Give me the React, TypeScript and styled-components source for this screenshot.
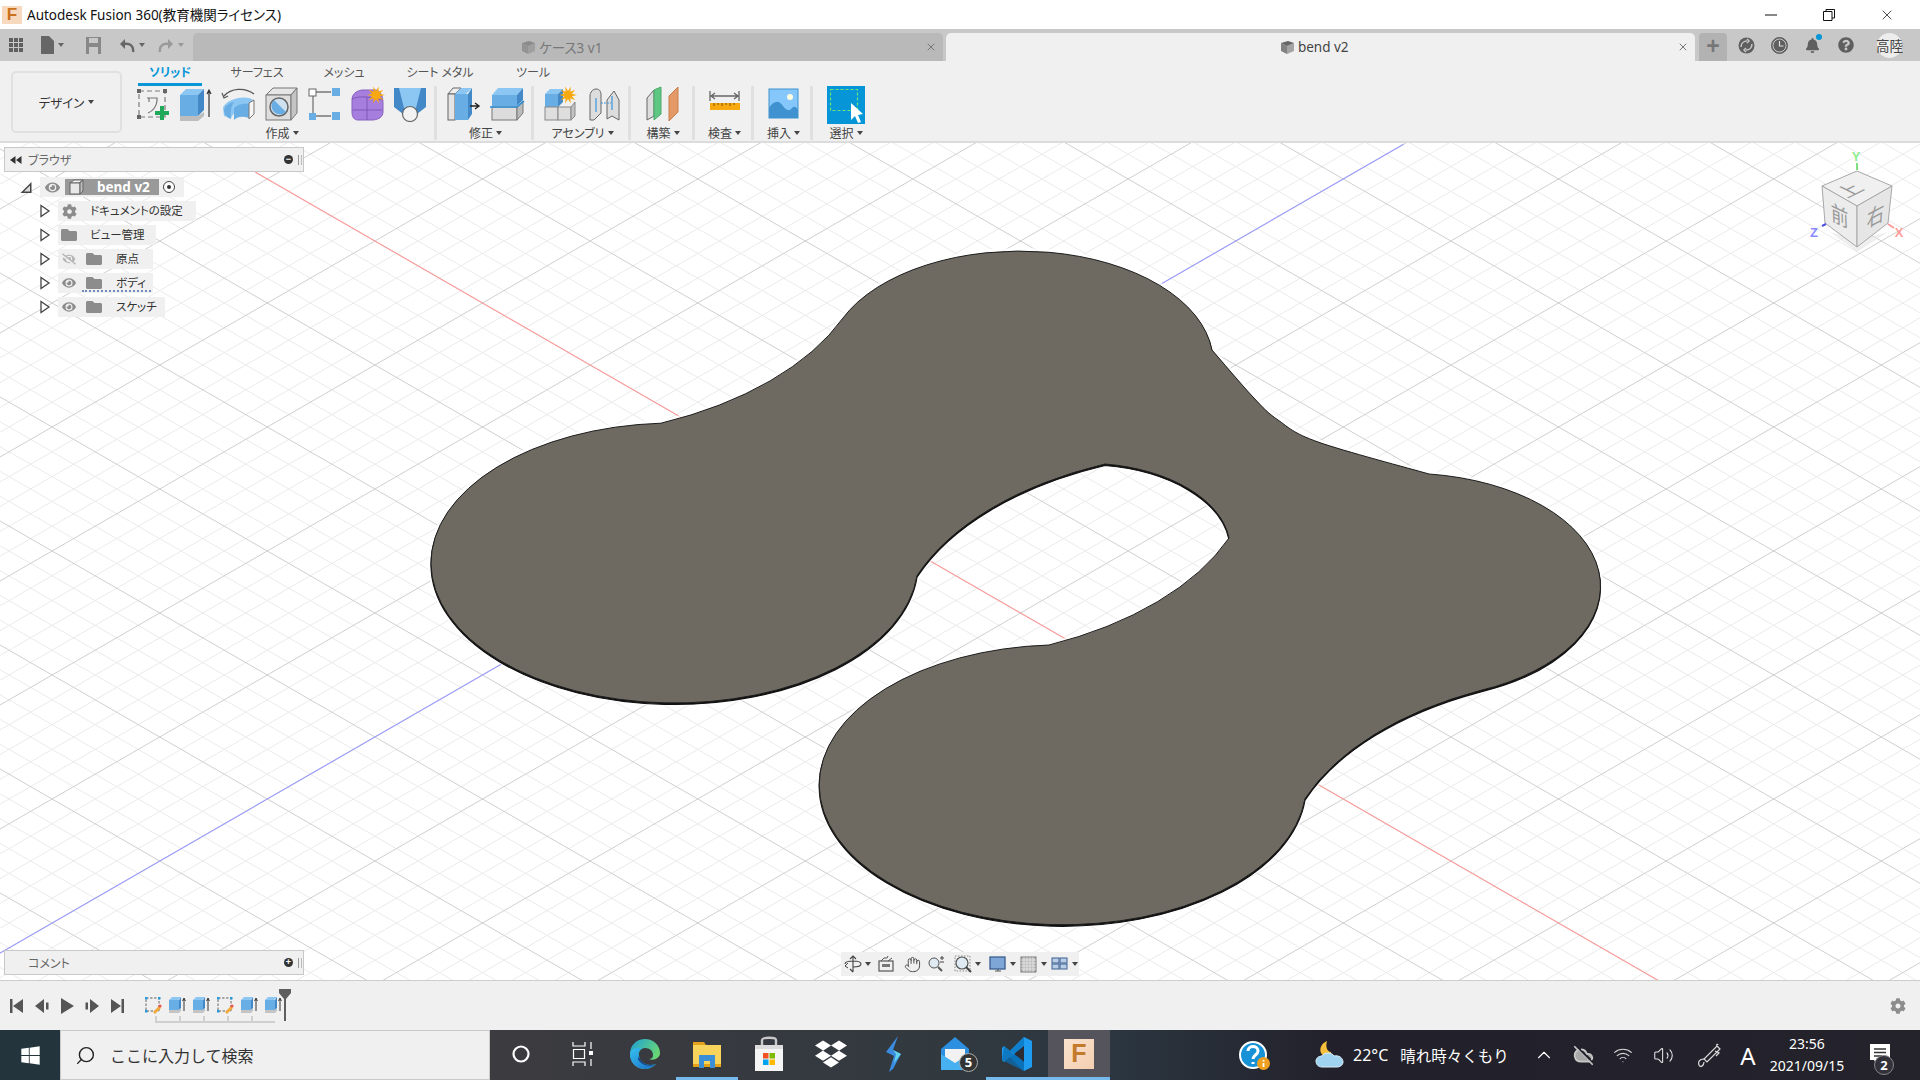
import React from "react";
import styled, { createGlobalStyle } from "styled-components";
import { FaCog, FaDropbox, FaEye, FaEyeSlash, FaFolder, FaQuestionCircle, FaWindows, FaBell } from "react-icons/fa";
import { ChevronUp, CloudOff, Hand, Search, Volume2, Wifi, X } from "lucide-react";

const GlobalStyle = createGlobalStyle`
  html, body { margin: 0; padding: 0; width: 1920px; height: 1080px; overflow: hidden; background: #fff; }
  body { font-family: "Noto Sans", "Noto Sans CJK JP", sans-serif; font-feature-settings: "palt"; }
`;

const jp = `"Noto Sans CJK JP", "Noto Sans", sans-serif`;

const Page = styled.div`
  width: 1920px;
  height: 1080px;
  display: flex;
  flex-direction: column;
`;

/* title bar */
const TitleBar = styled.div`
  height: 29px;
  flex: none;
  display: flex;
  align-items: center;
  background: #fff;
`;
const AppBadge = styled.div`
  width: 20px;
  height: 18px;
  margin-left: 2px;
  background: #f7d9bf;
  color: #c9711d;
  font: 700 17px/18px "Liberation Sans", sans-serif;
  text-align: center;
`;
const TitleText = styled.div`
  margin: 0 0 2px 5px;
  font-family: "Noto Sans", "Noto Sans CJK JP", sans-serif;
  font-size: 13.5px;
  color: #111;
`;
const WindowButtons = styled.div`
  margin-left: auto;
  margin-right: 4px;
  display: flex;
`;
const WindowButton = styled.div`
  width: 58px;
  height: 28px;
  display: flex;
  align-items: center;
  justify-content: center;
`;

/* tab strip */
const TabStrip = styled.div`
  height: 32px;
  flex: none;
  display: flex;
  align-items: flex-end;
  background: #c8c8c8;
`;
const QuickBar = styled.div`
  width: 193px;
  height: 32px;
  flex: none;
  display: flex;
  align-items: center;
  padding-left: 8px;
  box-sizing: border-box;
`;
const QuickButton = styled.div<{ $w: number; $ml?: number }>`
  width: ${(p) => p.$w}px;
  margin-left: ${(p) => p.$ml || 0}px;
  flex: none;
  display: flex;
  align-items: center;
  justify-content: center;
  gap: 4px;
`;
const Tabs = styled.div`
  width: 1502px;
  flex: none;
  display: flex;
  gap: 3px;
`;
const Tab = styled.div<{ $active?: boolean }>`
  flex: 1;
  height: 28px;
  box-sizing: border-box;
  padding-right: 12px;
  display: flex;
  align-items: center;
  justify-content: center;
  gap: 3px;
  position: relative;
  border-radius: 5px 5px 0 0;
  background: ${(p) => (p.$active ? "#f0f0f0" : "#b9b9b9")};
  color: ${(p) => (p.$active ? "#444" : "#777")};
  font-size: 13.5px;
  font-family: "Noto Sans", "Noto Sans CJK JP", sans-serif;
`;
const TabClose = styled.span`
  position: absolute;
  right: 6px;
  top: 8px;
  display: flex;
  color: #777;
`;
const AddTab = styled.div`
  width: 28px;
  height: 28px;
  margin-left: 4px;
  border-radius: 4px 4px 0 0;
  background: #b2b2b2;
  color: #777;
  font: 700 23px/27px "Liberation Sans", sans-serif;
  text-align: center;
`;
const TabTools = styled.div`
  display: flex;
  align-items: center;
  height: 32px;
  margin-left: 3px;
`;
const ToolButton = styled.div`
  width: 33px;
  display: flex;
  align-items: center;
  justify-content: center;
  position: relative;
  color: #5f5f5f;
`;
const BellDot = styled.span`
  position: absolute;
  right: 7px;
  top: -4px;
  width: 6px;
  height: 6px;
  border-radius: 50%;
  background: #0696d7;
`;
const Avatar = styled.div`
  width: 25px;
  height: 25px;
  margin-left: 15px;
  border-radius: 50%;
  background: #ededed;
  display: flex;
  align-items: center;
  justify-content: center;
  white-space: nowrap;
  font-family: ${jp};
  font-size: 13.5px;
  color: #444;
`;

/* ribbon */
const Ribbon = styled.div`
  height: 82px;
  flex: none;
  display: flex;
  box-sizing: border-box;
  background: #f0f0f0;
  border-bottom: 2px solid #dcdcdc;
  font-family: ${jp};
`;
const WorkspaceCell = styled.div`
  width: 130px;
  flex: none;
`;
const WorkspaceButton = styled.div`
  width: 111px;
  height: 62px;
  margin: 10px 0 0 11px;
  box-sizing: border-box;
  border: 2px solid #e0e0e0;
  border-radius: 5px;
  display: flex;
  align-items: center;
  justify-content: center;
  gap: 4px;
  font-size: 12.5px;
  color: #333;
`;
const RibbonBody = styled.div`
  display: flex;
  flex-direction: column;
`;
const RibbonTabs = styled.div`
  height: 25px;
  display: flex;
  padding-left: 8px;
`;
const RibbonTab = styled.div<{ $w: number; $active?: boolean }>`
  width: ${(p) => p.$w}px;
  flex: none;
  box-sizing: border-box;
  text-align: center;
  font-size: 12px;
  line-height: 22px;
  height: 25px;
  color: ${(p) => (p.$active ? "#0696d7" : "#555")};
  font-weight: ${(p) => (p.$active ? 700 : 400)};
  border-bottom: 3px solid ${(p) => (p.$active ? "#0696d7" : "transparent")};
`;
const Groups = styled.div`
  display: flex;
  align-items: flex-start;
`;
const Group = styled.div<{ $w: number; $first?: boolean; $last?: boolean }>`
  width: ${(p) => p.$w}px;
  height: 54px;
  flex: none;
  box-sizing: border-box;
  padding-left: ${(p) => (p.$first || p.$last ? 0 : 3)}px;
  display: flex;
  flex-direction: column;
  align-items: center;
  border-right: ${(p) => (p.$last ? "none" : "3px solid #e0e0e0")};
`;
const GroupIcons = styled.div`
  height: 39px;
  display: flex;
  align-items: flex-start;
  justify-content: center;
  gap: 7px;
`;
const GroupLabel = styled.div`
  height: 15px;
  display: flex;
  align-items: center;
  gap: 3px;
  font-size: 12px;
  color: #444;
  white-space: nowrap;
`;
const Caret = styled.i<{ $color?: string }>`
  display: inline-block;
  width: 0;
  height: 0;
  border-left: 3px solid transparent;
  border-right: 3px solid transparent;
  border-top: 4px solid ${(p) => p.$color || "#444"};
`;
const RibbonSvg = styled.svg`
  width: 36px;
  height: 36px;
  display: block;
  flex: none;
`;

/* viewport */
const Viewport = styled.div`
  position: relative;
  flex: 1;
  min-height: 0;
  overflow: hidden;
  background: #fff;
`;
const Scene = styled.svg`
  position: absolute;
  inset: 0;
  width: 1920px;
  height: 837px;
`;
const CubeLabel = styled.text`
  font-family: ${jp};
  font-size: 22px;
  fill: #9a9a9a;
  text-anchor: middle;
`;
const AxisLabel = styled.text`
  font-family: "Liberation Sans", sans-serif;
  font-size: 13px;
  font-weight: 700;
  text-anchor: middle;
`;
const SidePanel = styled.div<{ $top?: number; $bottom?: number }>`
  position: absolute;
  left: 4px;
  ${(p) => (p.$top !== undefined ? `top: ${p.$top}px;` : "")}
  ${(p) => (p.$bottom !== undefined ? `bottom: ${p.$bottom}px;` : "")}
  width: 300px;
  height: 25px;
  box-sizing: border-box;
  display: flex;
  align-items: center;
  background: #f0f0f0;
  border: 1px solid #c8c8c8;
  font-family: ${jp};
  font-size: 12px;
  color: #666;
`;
const PanelTitle = styled.span<{ $left: number }>`
  margin-left: ${(p) => p.$left}px;
`;
const PanelEnd = styled.div`
  margin-left: auto;
  display: flex;
  align-items: center;
  gap: 5px;
  padding-right: 1px;
`;
const RoundButton = styled.span`
  width: 9px;
  height: 9px;
  border-radius: 50%;
  background: #333;
  color: #fff;
  font: 700 9px/8px "Liberation Sans", sans-serif;
  text-align: center;
`;
const Grip = styled.span`
  width: 2px;
  height: 10px;
  border-left: 1px solid #999;
  border-right: 1px solid #bbb;
`;
const Tree = styled.div`
  position: absolute;
  left: 0;
  top: 32px;
  font-family: ${jp};
  font-size: 11.5px;
  color: #333;
`;
const TreeRow = styled.div<{ $indent: number }>`
  height: 24px;
  display: flex;
  align-items: center;
  padding-left: ${(p) => p.$indent}px;
`;
const TreeArrow = styled.svg`
  width: 12px;
  height: 14px;
  flex: none;
  display: block;
`;
const TreePill = styled.div<{ $w: number; $ml: number }>`
  position: relative;
  width: ${(p) => p.$w}px;
  height: 20px;
  margin-left: ${(p) => p.$ml}px;
  display: flex;
  align-items: center;
  background: #f0f0f0;
`;
const TreeSlot = styled.span<{ $w: number; $ml?: number }>`
  width: ${(p) => p.$w}px;
  margin-left: ${(p) => p.$ml || 0}px;
  flex: none;
  display: flex;
  align-items: center;
  justify-content: center;
  color: #8c8c8c;
`;
const TreeText = styled.span<{ $ml: number }>`
  margin-left: ${(p) => p.$ml}px;
  margin-bottom: 2px;
  white-space: nowrap;
`;
const RootName = styled.div`
  width: 94px;
  height: 16px;
  margin-left: 1px;
  display: flex;
  align-items: center;
  background: #999;
  color: #fff;
  font: 700 13.5px "Noto Sans", sans-serif;
`;
const Squiggle = styled.span`
  position: absolute;
  left: 24px;
  right: 2px;
  bottom: 1px;
  border-bottom: 2px dotted #6f8cbc;
`;
const NavBar = styled.div`
  position: absolute;
  left: 841px;
  bottom: 4px;
  height: 24px;
  display: flex;
  align-items: center;
  background: #f0f0f0;
`;
const NavItem = styled.div<{ $w: number }>`
  width: ${(p) => p.$w}px;
  height: 24px;
  flex: none;
  display: flex;
  align-items: center;
  justify-content: center;
  gap: 3px;
  color: #444;
`;
const SmallSvg = styled.svg`
  width: 18px;
  height: 18px;
  display: block;
  flex: none;
`;

/* timeline */
const TimelineBar = styled.div`
  height: 50px;
  flex: none;
  display: flex;
  align-items: center;
  box-sizing: border-box;
  background: #f0f0f0;
  border-top: 1px solid #cdcdcd;
  position: relative;
`;
const PlayButtons = styled.div`
  display: flex;
  width: 141px;
  box-sizing: border-box;
  padding-left: 4px;
  flex: none;
`;
const PlayButton = styled.div`
  width: 25px;
  flex: none;
  display: flex;
  justify-content: center;
`;
const Steps = styled.div`
  position: relative;
  height: 36px;
  display: flex;
  align-items: flex-start;
  padding-top: 8px;
  box-sizing: border-box;
`;
const Step = styled.div`
  width: 24px;
  flex: none;
  display: flex;
  justify-content: center;
`;
const StepBracket = styled.div`
  position: absolute;
  left: 14px;
  top: 28px;
  width: 120px;
  height: 5px;
  border-bottom: 2px solid #cfcfcf;
  background: repeating-linear-gradient(90deg, #cfcfcf 0 2px, transparent 2px 24px);
`;
const Playhead = styled.svg`
  position: absolute;
  left: 137px;
  top: 0;
  width: 14px;
  height: 34px;
`;
const TimelineGear = styled.div`
  margin-left: auto;
  margin-right: 14px;
  display: flex;
  color: #8d8d8d;
`;

/* taskbar */
const Taskbar = styled.div`
  height: 50px;
  flex: none;
  display: flex;
  align-items: stretch;
  background: linear-gradient(90deg, #3c3b40 25%, #31393f 50%, #2b3640 58%, #22202a 70%, #24222b 100%);
  font-family: ${jp};
  font-feature-settings: normal;
  color: #fff;
`;
const StartButton = styled.div`
  width: 60px;
  flex: none;
  display: flex;
  align-items: center;
  justify-content: center;
  background: #24343c;
`;
const SearchBox = styled.div`
  width: 430px;
  flex: none;
  box-sizing: border-box;
  display: flex;
  align-items: center;
  background: #f0f0f0;
  border: 1px solid #c9c9c9;
  color: #333;
  font-size: 16px;
`;
const SearchIcon = styled.span`
  display: flex;
  margin-left: 14px;
  margin-right: 14px;
  transform: scaleX(-1);
  color: #222;
`;
const TaskButton = styled.div<{ $open?: boolean; $active?: boolean }>`
  width: 62px;
  flex: none;
  position: relative;
  display: flex;
  align-items: center;
  justify-content: center;
  background: ${(p) => (p.$active ? "#55535c" : "transparent")};
  box-sizing: border-box;
  border-bottom: 3px solid ${(p) => (p.$open ? "#76b9ed" : "transparent")};
`;
const MailBadge = styled.span`
  position: absolute;
  right: 8px;
  bottom: 5px;
  width: 19px;
  height: 19px;
  box-sizing: border-box;
  border: 1px solid #aaa;
  border-radius: 50%;
  background: #333;
  font: 700 13px/17px "Noto Sans", sans-serif;
  text-align: center;
`;
const FusionTile = styled.div`
  width: 30px;
  height: 30px;
  background: linear-gradient(135deg, #f9e2cf, #f4cfb0);
  color: #c47a2b;
  font: 700 25px/29px "Liberation Sans", sans-serif;
  text-align: center;
`;
const Tray = styled.div`
  margin-left: auto;
  display: flex;
  align-items: stretch;
`;
const TrayItem = styled.div<{ $w: number }>`
  width: ${(p) => p.$w}px;
  flex: none;
  display: flex;
  align-items: center;
  justify-content: center;
  position: relative;
`;
const WeatherItem = styled.div`
  width: 245px;
  flex: none;
  box-sizing: border-box;
  padding-left: 35px;
  display: flex;
  align-items: center;
  font-size: 15.5px;
  white-space: nowrap;
`;
const WeatherDeg = styled.span`
  margin-left: 8px;
  margin-right: 12px;
  font-family: "Noto Sans", sans-serif;
  font-size: 16px;
`;
const ImeLetter = styled.span`
  font: 400 24px "Noto Sans", sans-serif;
`;
const Clock = styled.div`
  font: 400 14px/22px "Noto Sans", sans-serif;
  text-align: center;
`;
const NoteBadge = styled.span`
  position: absolute;
  right: 13px;
  bottom: 5px;
  width: 20px;
  height: 20px;
  box-sizing: border-box;
  border: 1px solid #888;
  border-radius: 50%;
  background: #33313a;
  font: 700 13px/18px "Noto Sans", sans-serif;
  text-align: center;
`;

/* scene geometry, in page coordinates */
const ORIGIN = { x: 805.3, y: 489 };
const STEP = { x: 107.6, y: 62 };

type Line = { x1: number; y1: number; x2: number; y2: number; major: boolean };

function buildGrid(): Line[] {
  const lines: Line[] = [];
  const reach = 30;
  for (let i = -100; i <= 100; i++) {
    const k = i / 5;
    const major = i % 5 === 0;
    // lines running along the blue direction
    let cx = ORIGIN.x + k * STEP.x;
    let cy = ORIGIN.y + k * STEP.y;
    lines.push({ x1: cx - reach * STEP.x, y1: cy + reach * STEP.y, x2: cx + reach * STEP.x, y2: cy - reach * STEP.y, major });
    // lines running along the red direction
    cx = ORIGIN.x + k * STEP.x;
    cy = ORIGIN.y - k * STEP.y;
    lines.push({ x1: cx - reach * STEP.x, y1: cy - reach * STEP.y, x2: cx + reach * STEP.x, y2: cy + reach * STEP.y, major });
  }
  return lines;
}

const GRID = buildGrid();

// catmull-rom through the points, the start point is already on the path
function curve(run: number[][]): string {
  let d = "";
  for (let i = 0; i < run.length - 1; i++) {
    const p0 = run[i - 1] || run[i];
    const p1 = run[i];
    const p2 = run[i + 1];
    const p3 = run[i + 2] || p2;
    const c1x = p1[0] + (p2[0] - p0[0]) / 6;
    const c1y = p1[1] + (p2[1] - p0[1]) / 6;
    const c2x = p2[0] - (p3[0] - p1[0]) / 6;
    const c2y = p2[1] - (p3[1] - p1[1]) / 6;
    d += `C${c1x.toFixed(1)} ${c1y.toFixed(1)} ${c2x.toFixed(1)} ${c2y.toFixed(1)} ${p2[0]} ${p2[1]}`;
  }
  return d;
}

// the lobes are circles in the sketch, so ellipses in this view
const SHAPE = [
  "M661 423.2",
  "A340 195 0 0 0 843 318",
  "A193 111 0 0 1 1212 350",
  curve([[1212, 350], [1253, 397], [1278, 420], [1318, 442], [1429, 474]]),
  "A195 113 0 0 1 1480 690.6",
  "A340 195 0 0 0 1305 798.7",
  "A243.5 140 0 1 1 1049 645",
  "A340 195 0 0 0 1229 538",
  "A145 85 0 0 0 1105 464",
  "A340 195 0 0 0 917 575.7",
  "A243.5 140 0 1 1 661 423.2",
  "Z",
].join("");

function ViewCube() {
  return (
    <g>
      <polygon points="1830,232 1857,252 1888,232 1857,240" fill="#e4e4e4" opacity="0.6" />
      <polygon points="1822,186 1857,171 1892,186 1857,206" fill="#f0f0f0" stroke="#a8a8a8" />
      <polygon points="1822,186 1857,206 1857,247 1825,223" fill="#ececec" stroke="#a8a8a8" />
      <polygon points="1892,186 1857,206 1857,247 1888,223" fill="#e6e6e6" stroke="#a8a8a8" />
      <CubeLabel transform="matrix(0.85 -0.42 0.85 0.42 1856 194)">上</CubeLabel>
      <CubeLabel transform="matrix(0.8 0.38 0.04 1 1840 224)">前</CubeLabel>
      <CubeLabel transform="matrix(0.8 -0.42 -0.06 1 1875 224)">右</CubeLabel>
      <line x1="1857" y1="170" x2="1857" y2="163" stroke="#7fe27f" strokeWidth="2" />
      <line x1="1822" y1="226" x2="1826" y2="224" stroke="#4f4fe0" strokeWidth="2" />
      <line x1="1888" y1="224" x2="1894" y2="228" stroke="#ff9a9a" strokeWidth="2" />
      <AxisLabel x="1856" y="161" fill="#8fee8f">Y</AxisLabel>
      <AxisLabel x="1814" y="237" fill="#8a8aff">Z</AxisLabel>
      <AxisLabel x="1899" y="237" fill="#ff9d9d">X</AxisLabel>
    </g>
  );
}

function SceneView() {
  return (
    <Scene viewBox="0 143 1920 837">
      {GRID.filter((l) => !l.major).map((l, i) => (
        <line key={i} {...{ x1: l.x1, y1: l.y1, x2: l.x2, y2: l.y2 }} stroke="#ebebeb" strokeWidth="1" />
      ))}
      {GRID.filter((l) => l.major).map((l, i) => (
        <line key={i} {...{ x1: l.x1, y1: l.y1, x2: l.x2, y2: l.y2 }} stroke="#cfcfcf" strokeWidth="1" />
      ))}
      <line x1={ORIGIN.x - 8 * STEP.x} y1={ORIGIN.y + 8 * STEP.y} x2={ORIGIN.x + 5.56 * STEP.x} y2={ORIGIN.y - 5.56 * STEP.y} stroke="#9c9cff" strokeWidth="1.1" />
      <line x1={ORIGIN.x - 5.11 * STEP.x} y1={ORIGIN.y - 5.11 * STEP.y} x2={ORIGIN.x + 8 * STEP.x} y2={ORIGIN.y + 8 * STEP.y} stroke="#ff9c9c" strokeWidth="1.1" />
      <path d={SHAPE} fill="none" stroke="#fff" strokeWidth="6" opacity="0.7" />
      <path d={SHAPE} transform="translate(0 1.5)" fill="#111" stroke="#111" strokeWidth="1.2" />
      <path d={SHAPE} fill="#6e6a61" stroke="#1c1c1c" strokeWidth="1" />
      <ViewCube />
    </Scene>
  );
}

/* ribbon drawings */
const BLUE = "#68ade4";
const BLUE_DARK = "#4489c7";
const BLUE_LIGHT = "#8cc6f2";

function SketchIcon() {
  return (
    <RibbonSvg viewBox="0 0 36 36">
      <rect x="4" y="5" width="26" height="26" fill="none" stroke="#7d7d7d" strokeWidth="1.2" strokeDasharray="5 3" />
      {[[2, 3], [28, 3], [2, 29]].map(([x, y]) => (
        <rect key={x * 10 + y} x={x} y={y} width="4" height="4" fill="#666" />
      ))}
      <path d="M12 12h10v3M14 12v4M22 14c0 6-4 11-9 13" fill="none" stroke="#777" strokeWidth="1.2" />
      <path d="M25 20h4v5h5v4h-5v5h-4v-5h-5v-4h5z" fill="#21a95a" />
    </RibbonSvg>
  );
}
function ExtrudeIcon() {
  return (
    <RibbonSvg viewBox="0 0 36 36">
      <polygon points="2,9 8,3 26,3 20,9" fill={BLUE_LIGHT} />
      <rect x="2" y="9" width="18" height="21" fill={BLUE} />
      <polygon points="20,9 26,3 26,24 20,30" fill={BLUE_DARK} />
      <polygon points="2,30 20,30 26,26 26,30 20,35 2,35" fill="#bdbdbd" />
      <path d="M31 31V5M29 8l2-4 2 4" fill="none" stroke="#333" strokeWidth="1.2" />
    </RibbonSvg>
  );
}
function RevolveIcon() {
  return (
    <RibbonSvg viewBox="0 0 36 36">
      <path d="M3 10C10 2 24 1 33 8" fill="none" stroke="#555" strokeWidth="1.3" />
      <path d="M1 7l2 5 4-2" fill="none" stroke="#555" strokeWidth="1.2" />
      <path d="M2 22C4 14 24 8 32 14L28 24C22 22 14 24 10 32L3 30z" fill={BLUE_LIGHT} />
      <path d="M3 24C4 20 8 17 13 16C10 20 9 27 10 33C6 32 3 28 3 24z" fill={BLUE} />
      <path d="M13 22C17 18 23 17 28 18V32C22 30 17 30 13 34z" fill={BLUE} />
      <polygon points="28,17 33,14 33,28 28,33" fill="#f5f5f5" stroke="#777" />
    </RibbonSvg>
  );
}
function HoleIcon() {
  return (
    <RibbonSvg viewBox="0 0 36 36">
      <polygon points="2,9 9,2 33,2 27,9" fill="#e6e6e6" stroke="#777" />
      <rect x="2" y="9" width="25" height="25" fill="#dedede" stroke="#777" />
      <polygon points="27,9 33,2 33,27 27,34" fill="#c4c4c4" stroke="#777" />
      <circle cx="15" cy="21" r="9" fill="#cfe0ee" stroke="#666" strokeWidth="1.5" />
      <path d="M10 14a8 8 0 0 0 12 12z" fill={BLUE} />
    </RibbonSvg>
  );
}
function PatternIcon() {
  return (
    <RibbonSvg viewBox="0 0 36 36">
      <path d="M9 6h15M6 10v19M9 30h15" stroke="#777" strokeWidth="1.3" />
      <rect x="2" y="3" width="7" height="7" fill="#fff" stroke="#666" />
      <rect x="25" y="2" width="8" height="8" fill={BLUE} />
      <rect x="2" y="27" width="7" height="7" fill={BLUE} />
      <rect x="25" y="26" width="8" height="8" fill={BLUE} />
    </RibbonSvg>
  );
}
function Star({ x, y, r }: { x: number; y: number; r: number }) {
  const pts: string[] = [];
  for (let i = 0; i < 20; i++) {
    const a = (i * Math.PI) / 10;
    const d = i % 2 ? r * 0.45 : r;
    pts.push(`${(x + Math.cos(a) * d).toFixed(1)},${(y + Math.sin(a) * d).toFixed(1)}`);
  }
  return <polygon points={pts.join(" ")} fill="#f7a90f" />;
}
function FormIcon() {
  return (
    <RibbonSvg viewBox="0 0 36 36">
      <path d="M2 14C2 8 6 5 12 4H26C32 6 33 12 33 18V26C33 31 28 34 22 34H8C4 34 2 31 2 26z" fill="#a67ede" stroke="#8860c0" />
      <path d="M2 13C8 10 18 10 32 14M17 11V34M3 24H32" fill="none" stroke="#7e58b8" />
      <Star x={26} y={9} r={9} />
    </RibbonSvg>
  );
}
function LoftIcon() {
  return (
    <RibbonSvg viewBox="0 0 36 36">
      <polygon points="1,2 33,2 33,21 24,28 10,28 1,21" fill={BLUE_DARK} />
      <polygon points="6,2 28,2 23,22 11,22" fill={BLUE_LIGHT} />
      <circle cx="17" cy="28" r="7.5" fill="#f2f2f2" stroke="#666" strokeWidth="1.2" />
    </RibbonSvg>
  );
}
function PressPullIcon() {
  return (
    <RibbonSvg viewBox="0 0 36 36">
      <polygon points="2,8 7,2 15,2 9,8" fill="#eee" stroke="#666" />
      <rect x="2" y="8" width="7" height="26" fill="#e4e4e4" stroke="#666" />
      <polygon points="9,8 15,2 26,2 20,8" fill={BLUE_LIGHT} />
      <rect x="9" y="8" width="13" height="26" fill={BLUE} />
      <polygon points="22,8 26,2 26,28 22,34" fill={BLUE_DARK} />
      <path d="M24 20h8M29 17l4 3-4 3" fill="none" stroke="#222" strokeWidth="1.4" />
    </RibbonSvg>
  );
}
function FilletIcon() {
  return (
    <RibbonSvg viewBox="0 0 36 36">
      <polygon points="3,9 9,2 34,2 28,9" fill={BLUE_LIGHT} />
      <rect x="3" y="9" width="25" height="11" fill={BLUE} />
      <polygon points="28,9 34,2 34,14 28,20" fill={BLUE_DARK} />
      <rect x="3" y="21" width="25" height="13" fill="#dcdcdc" stroke="#777" />
      <polygon points="28,21 34,15 34,27 28,34" fill="#bbb" stroke="#777" />
      <path d="M1 21H28L35 15" fill="none" stroke="#2a8fd8" strokeWidth="1.5" />
    </RibbonSvg>
  );
}
function NewComponentIcon() {
  return (
    <RibbonSvg viewBox="0 0 36 36">
      <polygon points="2,8 7,3 20,3 15,8" fill={BLUE_LIGHT} />
      <rect x="2" y="8" width="13" height="13" fill={BLUE} />
      <polygon points="15,8 20,3 20,16 15,21" fill={BLUE_DARK} />
      <rect x="2" y="21" width="13" height="13" fill="#dedede" stroke="#888" />
      <rect x="15" y="21" width="13" height="13" fill="#dedede" stroke="#888" />
      <polygon points="28,21 32,16 32,30 28,34" fill="#c2c2c2" stroke="#888" />
      <Star x={25} y={9} r={9} />
    </RibbonSvg>
  );
}
function JointIcon() {
  return (
    <RibbonSvg viewBox="0 0 36 36">
      <path d="M4 34V10C4 6 7 3 10 3C14 3 15 6 15 9V27L8 34z" fill="#ddd" stroke="#666" />
      <path d="M21 14L28 5L33 14V34L26 30L21 33z" fill="#ddd" stroke="#666" />
      <path d="M10 12v14M26 10v14" stroke="#3c94dc" strokeWidth="1.2" />
      <path d="M15 17h10" stroke="#3c94dc" strokeWidth="1" strokeDasharray="2 1" />
    </RibbonSvg>
  );
}
function PlaneIcon() {
  return (
    <RibbonSvg viewBox="0 0 36 36">
      <polygon points="2,12 9,4 9,30 2,34" fill="#ddd" stroke="#666" />
      <polygon points="9,4 16,1 16,28 9,34" fill="#5ec782" stroke="#4aa86c" />
      <polygon points="24,10 33,1 33,26 24,35" fill="#e49a66" stroke="#c97f4c" />
    </RibbonSvg>
  );
}
function MeasureIcon() {
  return (
    <RibbonSvg viewBox="0 0 36 36">
      <path d="M3 5V15M32 5V15M4 10H31M8 7l-4 3 4 3M27 7l4 3-4 3" fill="none" stroke="#666" strokeWidth="1.3" />
      <rect x="3" y="17" width="30" height="7" fill="#f7a90f" />
      <path d="M7 17v3M11 17v2M15 17v3M19 17v2M23 17v3M27 17v2" stroke="#7b5200" />
    </RibbonSvg>
  );
}
function ImageIcon() {
  return (
    <RibbonSvg viewBox="0 0 36 36">
      <rect x="3" y="3" width="29" height="29" fill="#86c7fb" stroke="#3f93ce" />
      <circle cx="24" cy="11" r="3" fill="#fdfbe0" />
      <path d="M3 32V22C8 14 13 14 17 20C20 24 23 26 26 22C28 20 30 20 32 24V32z" fill="#3f92cf" />
    </RibbonSvg>
  );
}
function SelectIcon() {
  return (
    <svg width="38" height="38" viewBox="0 0 38 38" style={{ display: "block" }}>
      <rect width="38" height="38" fill="#0696d7" />
      <rect x="3.5" y="3.5" width="27" height="21" fill="none" stroke="#6ee07c" strokeWidth="1.2" strokeDasharray="3 2" />
      <path d="M24 17V34L28 30L31 37L34 36L31 29L36 28z" fill="#fff" />
    </svg>
  );
}

const RIBBON_GROUPS = [
  { label: "作成", w: 307, icons: [SketchIcon, ExtrudeIcon, RevolveIcon, HoleIcon, PatternIcon, FormIcon, LoftIcon] },
  { label: "修正", w: 97, icons: [PressPullIcon, FilletIcon] },
  { label: "アセンブリ", w: 97, icons: [NewComponentIcon, JointIcon] },
  { label: "構築", w: 64, icons: [PlaneIcon] },
  { label: "検査", w: 59, icons: [MeasureIcon] },
  { label: "挿入", w: 59, icons: [ImageIcon] },
  { label: "選択", w: 66, icons: [SelectIcon] },
];

const RIBBON_TABS = [
  { label: "ソリッド", w: 64 },
  { label: "サーフェス", w: 110 },
  { label: "メッシュ", w: 64 },
  { label: "シート メタル", w: 128 },
  { label: "ツール", w: 58 },
];

function RibbonArea() {
  return (
    <Ribbon>
      <WorkspaceCell>
        <WorkspaceButton>
          デザイン <Caret />
        </WorkspaceButton>
      </WorkspaceCell>
      <RibbonBody>
        <RibbonTabs>
          {RIBBON_TABS.map((t, i) => (
            <RibbonTab key={t.label} $w={t.w} $active={i === 0}>{t.label}</RibbonTab>
          ))}
        </RibbonTabs>
        <Groups>
          {RIBBON_GROUPS.map((g, i) => (
            <Group key={g.label} $w={g.w} $first={i === 0} $last={i === RIBBON_GROUPS.length - 1}>
              <GroupIcons>
                {g.icons.map((Icon, k) => (
                  <Icon key={k} />
                ))}
              </GroupIcons>
              <GroupLabel>
                {g.label}
                <Caret />
              </GroupLabel>
            </Group>
          ))}
        </Groups>
      </RibbonBody>
    </Ribbon>
  );
}

/* browser tree */
function ClosedArrow() {
  return (
    <TreeArrow viewBox="0 0 12 14">
      <path d="M2 1.5L10 7L2 12.5z" fill="#fff" stroke="#444" strokeWidth="1.3" />
    </TreeArrow>
  );
}

const NODES = [
  { text: "ドキュメントの設定", w: 138, kind: "gear" },
  { text: "ビュー管理", w: 98, kind: "folder" },
  { text: "原点", w: 95, kind: "hidden" },
  { text: "ボディ", w: 95, kind: "shown", warn: true },
  { text: "スケッチ", w: 107, kind: "shown" },
];

function BrowserTree() {
  return (
    <Tree>
      <TreeRow $indent={20}>
        <TreeArrow viewBox="0 0 12 14">
          <path d="M0.5 13L11.5 2V13z" fill="#444" />
          <path d="M4 11.5L10 5.5V11.5z" fill="#ddd" />
        </TreeArrow>
        <TreePill $w={144} $ml={8}>
          <TreeSlot $w={24}><FaEye size={15} /></TreeSlot>
          <RootName>
            <svg width="18" height="16" viewBox="0 0 18 16" style={{ marginLeft: 3 }}>
              <polygon points="2,4 6,1 15,1 11,4" fill="#f4f4f4" stroke="#666" />
              <rect x="2" y="4" width="10" height="11" fill="#e8e8e8" stroke="#666" />
              <polygon points="12,4 15,1 15,12 12,15" fill="#bcbcbc" stroke="#666" />
            </svg>
            <span style={{ marginLeft: 11 }}>bend v2</span>
          </RootName>
          <svg width="14" height="14" viewBox="0 0 14 14" style={{ marginLeft: 3 }}>
            <circle cx="7" cy="7" r="5.5" fill="#fff" stroke="#444" />
            <circle cx="7" cy="7" r="2" fill="#333" />
          </svg>
        </TreePill>
      </TreeRow>
      {NODES.map((n) => (
        <TreeRow key={n.text} $indent={39}>
          <ClosedArrow />
          <TreePill $w={n.w} $ml={7}>
            {n.kind === "gear" && (
              <TreeSlot $w={16} $ml={3}><FaCog size={15} /></TreeSlot>
            )}
            {n.kind === "folder" && (
              <TreeSlot $w={16} $ml={3}><FaFolder size={16} /></TreeSlot>
            )}
            {(n.kind === "shown" || n.kind === "hidden") && (
              <>
                <TreeSlot $w={16} $ml={3}>
                  {n.kind === "shown" ? <FaEye size={14} /> : <FaEyeSlash size={14} color="#b5b5b5" />}
                </TreeSlot>
                <TreeSlot $w={16} $ml={9}><FaFolder size={16} /></TreeSlot>
              </>
            )}
            <TreeText $ml={n.kind === "gear" || n.kind === "folder" ? 13 : 14}>{n.text}</TreeText>
            {n.warn && <Squiggle />}
          </TreePill>
        </TreeRow>
      ))}
    </Tree>
  );
}

/* navigation bar under the viewport */
function NavBarArea() {
  return (
    <NavBar>
      <NavItem $w={32}>
        <SmallSvg viewBox="0 0 18 18">
          <path d="M9 1v16M6 4l3-3 3 3M6 14l3 3M1 9c0-2 3-3 8-3s8 1 8 3-4 3-8 3" fill="none" stroke="#444" strokeWidth="1.1" />
          <path d="M4 8L1 11l3 2" fill="none" stroke="#444" />
        </SmallSvg>
        <Caret />
      </NavItem>
      <NavItem $w={26}>
        <SmallSvg viewBox="0 0 18 18">
          <rect x="2" y="6" width="14" height="10" fill="none" stroke="#555" strokeWidth="1.2" />
          <rect x="5" y="9" width="8" height="3" fill="#777" />
          <path d="M4 6l3-3h3l1-2M11 6l4-3" fill="none" stroke="#555" />
        </SmallSvg>
      </NavItem>
      <NavItem $w={26}>
        <Hand size={17} strokeWidth={1.3} />
      </NavItem>
      <NavItem $w={22}>
        <SmallSvg viewBox="0 0 18 18">
          <circle cx="7" cy="8" r="5" fill="#dfeaf3" stroke="#555" />
          <path d="M11 12l4 4" stroke="#555" strokeWidth="2" />
          <path d="M13 3h4M15 1v4M13 7h4" stroke="#444" />
        </SmallSvg>
      </NavItem>
      <NavItem $w={40}>
        <SmallSvg viewBox="0 0 18 18">
          <rect x="1" y="1" width="15" height="15" fill="none" stroke="#888" strokeDasharray="1.5 1.5" />
          <circle cx="8" cy="8" r="6" fill="#dfeaf3" stroke="#555" strokeWidth="1.2" />
          <path d="M12 12l5 5" stroke="#444" strokeWidth="2" />
        </SmallSvg>
        <Caret />
      </NavItem>
      <NavItem $w={31}>
        <SmallSvg viewBox="0 0 18 18">
          <rect x="1" y="2" width="15" height="12" fill="#7ea6d6" stroke="#3a5f8f" strokeWidth="1.3" />
          <path d="M6 16h6M9 14v2" stroke="#555" />
        </SmallSvg>
        <Caret />
      </NavItem>
      <NavItem $w={31}>
        <SmallSvg viewBox="0 0 18 18">
          <rect x="1" y="2" width="15" height="15" fill="#bbb" stroke="#777" />
          <path d="M4 2v15M7 2v15M10 2v15M13 2v15M1 5h15M1 8h15M1 11h15M1 14h15" stroke="#eee" strokeWidth="0.7" />
        </SmallSvg>
        <Caret />
      </NavItem>
      <NavItem $w={30}>
        <SmallSvg viewBox="0 0 18 18">
          <rect x="1" y="3" width="7" height="5" fill="#b9cde6" stroke="#3a5f8f" />
          <rect x="9" y="3" width="7" height="5" fill="#b9cde6" stroke="#3a5f8f" />
          <rect x="1" y="9" width="7" height="5" fill="#b9cde6" stroke="#3a5f8f" />
          <rect x="9" y="9" width="7" height="5" fill="#b9cde6" stroke="#3a5f8f" />
        </SmallSvg>
        <Caret />
      </NavItem>
    </NavBar>
  );
}

/* timeline */
const PLAY_PATHS = [
  "M2 2h2.5v14H2zM15 2v14L5 9z",
  "M11 2v14L2 9zM13 5.5h2.5v7H13z",
  "M3 1v16l13-8z",
  "M7 2v14l9-7zM2.5 5.5H5v7H2.5z",
  "M3 2v14l10-7zM13.5 2H16v14h-2.5z",
];

function SketchStep() {
  return (
    <SmallSvg viewBox="0 0 18 18">
      <rect x="2" y="2" width="13" height="13" fill="none" stroke="#666" strokeDasharray="2.5 1.5" />
      <rect x="1" y="1" width="2.5" height="2.5" fill="#2a9ad8" />
      <rect x="14" y="1" width="2.5" height="2.5" fill="#2a9ad8" />
      <rect x="1" y="14" width="2.5" height="2.5" fill="#2a9ad8" />
      <path d="M9 16l6-6 2 2-6 6z" fill="#f2a93b" />
      <circle cx="16" cy="10" r="1.6" fill="#e8564e" />
    </SmallSvg>
  );
}
function ExtrudeStep() {
  return (
    <SmallSvg viewBox="0 0 18 18">
      <polygon points="1,4 4,1 13,1 10,4" fill={BLUE_LIGHT} />
      <rect x="1" y="4" width="10" height="10" fill={BLUE} />
      <polygon points="11,4 13,1 13,12 11,14" fill={BLUE_DARK} />
      <polygon points="1,14 11,14 13,12 13,15 11,17 1,17" fill="#c4c4c4" />
      <path d="M16 15V3M14.6 5L16 2l1.4 3" fill="none" stroke="#333" />
    </SmallSvg>
  );
}

function TimelineArea() {
  return (
    <TimelineBar>
      <PlayButtons>
        {PLAY_PATHS.map((d) => (
          <PlayButton key={d}>
            <SmallSvg viewBox="0 0 18 18">
              <path d={d} fill="#555" />
            </SmallSvg>
          </PlayButton>
        ))}
      </PlayButtons>
      <Steps>
        {[SketchStep, ExtrudeStep, ExtrudeStep, SketchStep, ExtrudeStep, ExtrudeStep].map((S, i) => (
          <Step key={i}>
            <S />
          </Step>
        ))}
        <StepBracket />
        <Playhead viewBox="0 0 14 34">
          <path d="M1 1h12v4L8 11v22H6V11L1 5z" fill="#5e5e5e" />
        </Playhead>
      </Steps>
      <TimelineGear>
        <FaCog size={16} />
      </TimelineGear>
    </TimelineBar>
  );
}

/* taskbar */
function EdgeIcon() {
  return (
    <svg width="32" height="32" viewBox="0 0 32 32">
      <defs>
        <linearGradient id="edgeA" x1="0" y1="0" x2="1" y2="1">
          <stop offset="0" stopColor="#35c1f1" />
          <stop offset="1" stopColor="#1b6cc4" />
        </linearGradient>
        <linearGradient id="edgeB" x1="0" y1="0" x2="1" y2="0.6">
          <stop offset="0" stopColor="#1f9fd8" />
          <stop offset="1" stopColor="#6fdc6a" />
        </linearGradient>
      </defs>
      <path d="M16 1C8 1 1 7 1 16C1 25 8 31 16 31C20 31 24 29 27 26C18 29 11 25 10 18C9 14 12 10 16 10C21 10 24 13 24 17C24 20 22 21 20 21C25 23 31 20 31 15C31 7 24 1 16 1z" fill="url(#edgeB)" />
      <path d="M1 16C1 25 8 31 16 31C20 31 24 29 27 26C18 29 11 25 10 18C9 14 11 11 13 10C7 9 2 11 1 16z" fill="url(#edgeA)" />
      <path d="M10 18C11 25 18 29 27 26C22 29 12 28 9 21z" fill="#123f85" />
    </svg>
  );
}
function ExplorerIcon() {
  return (
    <svg width="30" height="28" viewBox="0 0 30 28">
      <path d="M1 2h11l2 3H1z" fill="#e3a21a" />
      <rect x="1" y="5" width="28" height="22" fill="#f9d45c" />
      <path d="M1 24h28v3H1z" fill="#e3a21a" />
      <path d="M7 28V15h16v13h-5v-7h-6v7z" fill="#3a8fd6" />
    </svg>
  );
}
function StoreIcon() {
  return (
    <svg width="30" height="36" viewBox="0 0 30 36">
      <path d="M8 10V4c0-3 14-3 14 0v6" fill="none" stroke="#c8c8c8" strokeWidth="2.4" />
      <rect x="1" y="9" width="28" height="26" fill="#f5f5f5" />
      <rect x="1" y="9" width="28" height="4" fill="#dcdcdc" />
      <rect x="9" y="17" width="5.5" height="5.5" fill="#f25022" />
      <rect x="15.5" y="17" width="5.5" height="5.5" fill="#7fba00" />
      <rect x="9" y="23.5" width="5.5" height="5.5" fill="#00a4ef" />
      <rect x="15.5" y="23.5" width="5.5" height="5.5" fill="#ffb900" />
    </svg>
  );
}
function BoltIcon() {
  return (
    <svg width="18" height="36" viewBox="0 0 18 36">
      <path d="M14 0L2 16L10 20L5 36L9 33L17 18L9 14z" fill="#3b8be0" />
      <path d="M9 14L17 18L10 27L12 18z" fill="#62d3ea" />
    </svg>
  );
}
function MailIcon() {
  return (
    <svg width="32" height="36" viewBox="0 0 32 36">
      <path d="M2 13L16 1L30 13V34H2z" fill="#2c8fe0" />
      <path d="M6 13h20v9L16 28L6 22z" fill="#f2f2f2" />
      <path d="M2 18L16 27L30 18V34H2z" fill="#46b0f0" />
    </svg>
  );
}
function CodeIcon() {
  return (
    <svg width="32" height="36" viewBox="0 0 32 36">
      <path d="M23 1L31 5V31L23 35L9 21L3 26L1 24V12L3 10L9 15z" fill="#1f9cf0" />
      <path d="M23 1V35L9 21L15 18L9 15z" fill="#0e7fcd" />
      <path d="M23 10L13 18L23 26z" fill="#2c2c34" />
      <path d="M3 10L23 26V35L1 24z" fill="#0a6db3" opacity="0.75" />
    </svg>
  );
}
function WeatherIcon() {
  return (
    <svg width="30" height="30" viewBox="0 0 30 30">
      <path d="M12 1C7 3 4 8 6 13C7 15 9 16 11 16C14 16 16 14 16 12C13 12 10 8 12 1z" fill="#f6c03c" />
      <path d="M7 27C3 27 1 24 1 21C1 18 4 16 7 16C9 12 17 12 19 16C24 15 28 18 28 22C28 25 25 27 22 27z" fill="#9fd3f0" stroke="#d9eefa" />
    </svg>
  );
}
function TrayHelp() {
  return (
    <span style={{ position: "relative", display: "flex" }}>
      <svg width="28" height="28" viewBox="0 0 28 28">
        <circle cx="14" cy="14" r="13" fill="#1892d6" stroke="#fff" strokeWidth="2" />
        <path d="M9 10c0-6 10-6 10 0c0 4-5 4-5 8M14 21v2" fill="none" stroke="#fff" strokeWidth="3" />
      </svg>
      <svg width="13" height="13" viewBox="0 0 13 13" style={{ position: "absolute", right: -3, bottom: -1 }}>
        <circle cx="6.5" cy="6.5" r="6.5" fill="#f0a020" />
        <path d="M6.5 3v1.5M6.5 6v4" stroke="#fff" strokeWidth="1.8" />
      </svg>
    </span>
  );
}
function PenLoopIcon() {
  return (
    <svg width="24" height="24" viewBox="0 0 24 24">
      <path d="M20 3l3 3L10 19l-3-3zM20 3c-1-2 1-2 1-1" fill="none" stroke="#ddd" strokeWidth="1.2" />
      <path d="M7 16c-5 0-6 3-5 6s5 1 5-3" fill="none" stroke="#ddd" strokeWidth="1.2" />
      <path d="M18 8l4 2-3 3" fill="none" stroke="#ddd" strokeWidth="1.2" />
    </svg>
  );
}

function TaskbarArea() {
  return (
    <Taskbar>
      <StartButton>
        <FaWindows size={21} color="#fff" />
      </StartButton>
      <SearchBox>
        <SearchIcon>
          <Search size={21} strokeWidth={1.6} />
        </SearchIcon>
        ここに入力して検索
      </SearchBox>
      <TaskButton>
        <svg width="18" height="18" viewBox="0 0 18 18">
          <circle cx="9" cy="9" r="7.5" fill="none" stroke="#fff" strokeWidth="2.2" />
        </svg>
      </TaskButton>
      <TaskButton>
        <svg width="22" height="24" viewBox="0 0 22 24">
          <path d="M1 0v4h12V0M1 24v-4h12v4M1.5 7.5h11v9h-11zM19 0v7M19 17v7" fill="none" stroke="#fff" strokeWidth="1.2" />
          <rect x="17" y="9" width="4" height="4" fill="#fff" />
        </svg>
      </TaskButton>
      <TaskButton><EdgeIcon /></TaskButton>
      <TaskButton $open><ExplorerIcon /></TaskButton>
      <TaskButton><StoreIcon /></TaskButton>
      <TaskButton><FaDropbox size={32} color="#fff" /></TaskButton>
      <TaskButton><BoltIcon /></TaskButton>
      <TaskButton>
        <MailIcon />
        <MailBadge>5</MailBadge>
      </TaskButton>
      <TaskButton $open><CodeIcon /></TaskButton>
      <TaskButton $open $active>
        <FusionTile>F</FusionTile>
      </TaskButton>
      <Tray>
        <TrayItem $w={54}><TrayHelp /></TrayItem>
        <WeatherItem>
          <WeatherIcon />
          <WeatherDeg>22°C</WeatherDeg>
          晴れ時々くもり
        </WeatherItem>
        <TrayItem $w={38}><ChevronUp size={22} strokeWidth={1.2} /></TrayItem>
        <TrayItem $w={40}><CloudOff size={21} color="#c8c8c8" fill="#a8a8a8" /></TrayItem>
        <TrayItem $w={40}><Wifi size={20} strokeWidth={1.3} color="#d8d8d8" /></TrayItem>
        <TrayItem $w={40}><Volume2 size={21} strokeWidth={1.2} color="#e8e8e8" /></TrayItem>
        <TrayItem $w={52}><PenLoopIcon /></TrayItem>
        <TrayItem $w={26}><ImeLetter>A</ImeLetter></TrayItem>
        <TrayItem $w={92}>
          <Clock>
            23:56
            <br />
            2021/09/15
          </Clock>
        </TrayItem>
        <TrayItem $w={54}>
          <svg width="20" height="22" viewBox="0 0 20 22">
            <path d="M0 0h20v16H7v5l-3-5H0z" fill="#fff" />
            <path d="M4 5h12M4 8.5h12M4 12h8" stroke="#333" strokeWidth="1.4" />
          </svg>
          <NoteBadge>2</NoteBadge>
        </TrayItem>
        <TrayItem $w={13} />
      </Tray>
    </Taskbar>
  );
}

function CubeGlyph({ color }: { color: string }) {
  return (
    <svg width="15" height="15" viewBox="0 0 15 15">
      <polygon points="1,3 8,1 14,3 7,6" fill={color} />
      <polygon points="1,3 7,6 7,14 1,11" fill={color} opacity="0.8" />
      <polygon points="14,3 7,6 7,14 14,11" fill={color} opacity="0.55" />
    </svg>
  );
}

export default function App() {
  return (
    <>
      <GlobalStyle />
      <Page>
        <TitleBar>
          <AppBadge>F</AppBadge>
          <TitleText>Autodesk Fusion 360(教育機関ライセンス)</TitleText>
          <WindowButtons>
            <WindowButton>
              <svg width="12" height="2" viewBox="0 0 12 2"><path d="M0 1h12" stroke="#111" /></svg>
            </WindowButton>
            <WindowButton>
              <svg width="12" height="12" viewBox="0 0 12 12">
                <path d="M3 2.5V.5h8.500v8.500H9M.5 2.500h8.500v9H.5z" fill="none" stroke="#111" />
              </svg>
            </WindowButton>
            <WindowButton>
              <X size={16} strokeWidth={1.1} color="#111" />
            </WindowButton>
          </WindowButtons>
        </TitleBar>
        <TabStrip>
          <QuickBar>
            <QuickButton $w={16}>
              <svg width="15" height="15" viewBox="0 0 15 15" fill="#5f5f5f">
                {[0, 5, 10].flatMap((x) => [0, 5, 10].map((y) => <rect key={x * 20 + y} x={x} y={y} width="4" height="4" />))}
              </svg>
            </QuickButton>
            <QuickButton $w={30} $ml={13}>
              <svg width="13" height="18" viewBox="0 0 13 18"><path d="M0 0h8l5 5v13H0z" fill="#666" /></svg>
              <Caret $color="#666" />
            </QuickButton>
            <QuickButton $w={16} $ml={18}>
              <svg width="15" height="17" viewBox="0 0 15 17">
                <path d="M0 0h15v17H0z" fill="#888" />
                <rect x="3" y="1" width="9" height="5" fill="#c8c8c8" />
                <rect x="3" y="10" width="9" height="7" fill="#c8c8c8" />
              </svg>
            </QuickButton>
            <QuickButton $w={32} $ml={15}>
              <svg width="16" height="16" viewBox="0 0 16 16">
                <path d="M14 15c1-6-3-9-9-8" fill="none" stroke="#666" strokeWidth="2.4" />
                <path d="M6 2L1 7l5 5z" fill="#666" />
              </svg>
              <Caret $color="#666" />
            </QuickButton>
            <QuickButton $w={32} $ml={7}>
              <svg width="16" height="16" viewBox="0 0 16 16">
                <path d="M2 15C1 9 5 6 11 7" fill="none" stroke="#999" strokeWidth="2.4" />
                <path d="M10 2l5 5-5 5z" fill="#999" />
              </svg>
              <Caret $color="#999" />
            </QuickButton>
          </QuickBar>
          <Tabs>
            <Tab>
              <CubeGlyph color="#8a8a8a" />
              ケース3 v1
              <TabClose><X size={12} strokeWidth={2} /></TabClose>
            </Tab>
            <Tab $active>
              <CubeGlyph color="#666" />
              bend v2
              <TabClose><X size={12} strokeWidth={2} /></TabClose>
            </Tab>
          </Tabs>
          <AddTab>+</AddTab>
          <TabTools>
            <ToolButton>
              <svg width="17" height="17" viewBox="0 0 17 17">
                <circle cx="8.500" cy="8.500" r="8" fill="#5f5f5f" />
                <path d="M3 10c0-4 3-6 6-6M14 7c0 4-3 6-6 6M9 2l2 2-2 2M8 11l-2 2 2 2" fill="none" stroke="#c8c8c8" strokeWidth="1.5" />
              </svg>
            </ToolButton>
            <ToolButton>
              <svg width="17" height="17" viewBox="0 0 17 17">
                <circle cx="8.500" cy="8.500" r="8" fill="#5f5f5f" stroke="#5f5f5f" />
                <circle cx="8.500" cy="8.500" r="6.500" fill="#5f5f5f" stroke="#c8c8c8" />
                <path d="M8.500 4v5h4" fill="none" stroke="#ddd" strokeWidth="1.2" />
              </svg>
            </ToolButton>
            <ToolButton>
              <FaBell size={15} />
              <BellDot />
            </ToolButton>
            <ToolButton>
              <FaQuestionCircle size={16} />
            </ToolButton>
            <Avatar>高陸</Avatar>
          </TabTools>
        </TabStrip>
        <RibbonArea />
        <Viewport>
          <SceneView />
          <SidePanel $top={4}>
            <svg width="12" height="8" viewBox="0 0 12 8" style={{ marginLeft: 5 }}>
              <path d="M5.500 0v8L0 4zM11.500 0v8L6 4z" fill="#333" />
            </svg>
            <PanelTitle $left={6}>ブラウザ</PanelTitle>
            <PanelEnd>
              <RoundButton>−</RoundButton>
              <Grip />
            </PanelEnd>
          </SidePanel>
          <BrowserTree />
          <SidePanel $bottom={5}>
            <PanelTitle $left={23}>コメント</PanelTitle>
            <PanelEnd>
              <RoundButton>+</RoundButton>
              <Grip />
            </PanelEnd>
          </SidePanel>
          <NavBarArea />
        </Viewport>
        <TimelineArea />
        <TaskbarArea />
      </Page>
    </>
  );
}
